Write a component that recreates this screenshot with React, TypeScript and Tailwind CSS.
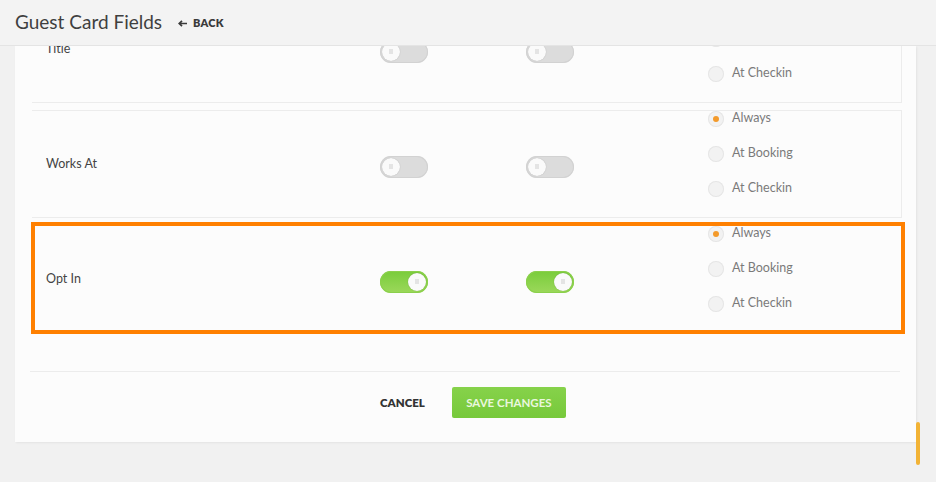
import React from 'react';

type Row = { label: string; on: boolean };

const rows: Row[] = [
  { label: 'Title', on: false },
  { label: 'Works At', on: false },
  { label: 'Opt In', on: true },
];

const options = ['Always', 'At Booking', 'At Checkin'];

function Toggle({ on }: { on: boolean }) {
  return (
    <div
      className={`flex h-[22px] w-[48px] items-center rounded-full px-[2px] ${
        on
          ? 'justify-end bg-gradient-to-b from-[#79cc3a] to-[#9bd85a] shadow-[inset_0_0_0_1px_#8bd04c]'
          : 'justify-start bg-[#dcdcdc] shadow-[inset_0_0_0_1px_#d2d2d2]'
      }`}
    >
      <div className="flex h-[18px] w-[18px] items-center justify-center rounded-full bg-[#fafafa] shadow-[0_0_1px_rgba(0,0,0,0.25)]">
        <div className="h-[5px] w-[4px] bg-[#e4e4e4]" />
      </div>
    </div>
  );
}

function Radio({ label, checked }: { label: string; checked: boolean }) {
  return (
    <div className="flex h-[35px] items-center gap-[8px]">
      <div className="flex h-[16px] w-[16px] items-center justify-center rounded-full bg-[#f2f2f2] shadow-[inset_0_0_0_1px_#e6e6e6]">
        {checked && <div className="h-[6px] w-[6px] rounded-full bg-[#f39a2b]" />}
      </div>
      <span className="text-[12.5px] text-[#7a7a7a]">{label}</span>
    </div>
  );
}

export default function App() {
  return (
    <div className="relative h-[482px] w-[936px] overflow-hidden bg-[#f1f1f1] font-['Lato',sans-serif]">
      {/* Header */}
      <div className="relative z-10 flex h-[46px] items-center border-b border-[#e4e4e4] bg-[#f3f3f3] pl-[15px]">
        <h1 className="text-[19px] text-[#3f3f3f]">Guest Card Fields</h1>
        <button className="ml-[16px] mt-[2px] flex items-center gap-[6px] text-[11px] font-extrabold tracking-[0.2px] text-[#3a3a3a]">
          <svg width="9" height="7" viewBox="0 0 9 7" fill="none">
            <path d="M4 0.8 L1.2 3.5 L4 6.2 M1.4 3.5 H9" stroke="#3a3a3a" strokeWidth="1.7" />
          </svg>
          BACK
        </button>
      </div>

      {/* Card */}
      <div className="ml-[15px] h-[396px] w-[901px] overflow-hidden bg-[#fcfcfc] shadow-[1px_1px_2px_rgba(0,0,0,0.06)]">
        <div className="mt-[-51px] flex flex-col gap-[7px]">
          {rows.map((row) => (
            <div
              key={row.label}
              className="ml-[17px] flex h-[108px] w-[870px] border-y border-r border-[#ececec] bg-[#fcfcfc]"
            >
              <div className="flex w-[348px] items-center pl-[14px] text-[12.5px] text-[#444]">
                {row.label}
              </div>
              <div className="flex w-[146px] items-center pt-[5px]">
                <Toggle on={row.on} />
              </div>
              <div className="flex w-[182px] items-center pt-[5px]">
                <Toggle on={row.on} />
              </div>
              <div className="mt-[-10px] flex flex-col">
                {options.map((o, i) => (
                  <Radio key={o} label={o} checked={i === 0} />
                ))}
              </div>
            </div>
          ))}
        </div>

        {/* Footer */}
        <div className="ml-[15px] mt-[38px] w-[870px] border-t border-[#ececec]">
          <div className="flex items-center justify-center gap-[27px] pl-[16px] pt-[15px]">
            <button className="text-[11.5px] font-extrabold text-[#333]">CANCEL</button>
            <button className="h-[31px] w-[114px] rounded-[2px] bg-gradient-to-b from-[#86d24a] to-[#77c93b] text-[11.5px] font-bold text-[#eaf7de]">
              SAVE CHANGES
            </button>
          </div>
        </div>
      </div>

      {/* Highlight annotation */}
      <div className="absolute left-[31px] top-[222px] h-[112px] w-[874px] border-4 border-[#ff8000]" />

      {/* Scrollbar thumb */}
      <div className="absolute left-[916px] top-[422px] h-[43px] w-[4px] rounded-full bg-[#f2b336]" />
    </div>
  );
}
